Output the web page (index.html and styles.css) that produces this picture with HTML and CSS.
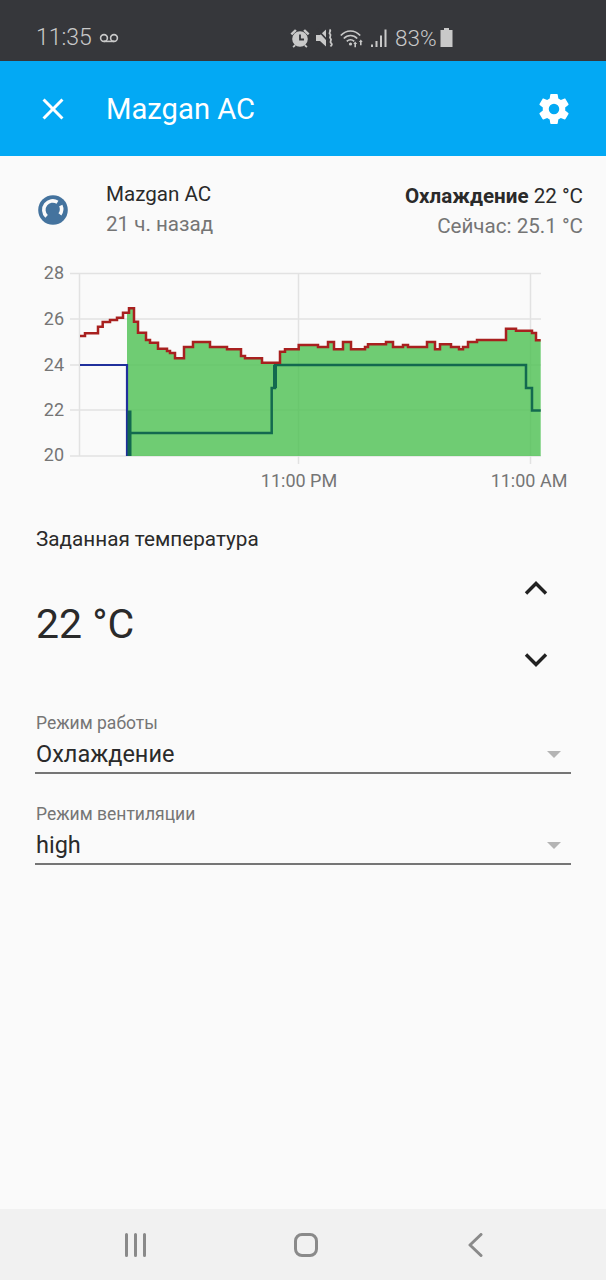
FILE: index.html
```html
<!DOCTYPE html>
<html lang="ru">
<head>
  <meta charset="UTF-8">
  <title>Mazgan AC</title>
  <link rel="stylesheet" href="styles.css">
</head>
<body>

  <!-- Status bar -->
  <div class="statusbar">
    <div class="status-left">
      <span class="clock">11:35</span>
      <svg class="voicemail" width="20" height="10" viewBox="0 0 20 10"><circle cx="5" cy="5" r="3.4"/><circle cx="15" cy="5" r="3.4"/><path d="M5 8.4h10"/></svg>
    </div>
    <div class="status-mid">
      <svg width="20" height="20" viewBox="0 0 20 20"><path class="solid" d="M10 3.200a7.800 7.800 0 1 0 0 15.600 7.800 7.800 0 0 0 0-15.600z"/><path class="cut" d="M10 6.500v5h4"/><path class="solid" d="M.5 5.500L5 1.200l1.800 1.600L2.200 7.200zM19.500 5.500L15 1.200l-1.800 1.600 4.600 4.400zM4.500 16.500l-2 2 1.200 1.200 2.200-2zM15.500 16.500l2 2-1.200 1.200-2.200-2z"/></svg>
      <svg width="18" height="20" viewBox="0 0 18 20"><path class="solid" d="M0 7h4l6-5.500v17L4 13H0z"/><path class="cut" d="M1 1l11 12"/><path class="wave" d="M13.500 1.500c2.500 1.500-1.500 3 .5 4.500s-1.500 3 .5 4.500-1.500 3 .5 4.500 0 2.500-.5 3.500"/></svg>
      <svg width="24" height="20" viewBox="0 0 24 20"><path class="line" d="M.8 7.500c5.500-6 13.900-6 19.400 0M3.800 10.500c3.800-4 9.600-4 13.400 0M6.800 13.400c2.100-2.200 5.300-2.200 7.400 0"/><circle class="solid" cx="10.500" cy="16" r="1.600"/><path class="solid" d="M15.200 13.500l1.900 2.500H16v3.200h-1.600V16h-1.100zM20.800 11.500l1.900 2.500h-1.100v3.200H20V14h-1.100z"/></svg>
      <svg width="18" height="20" viewBox="0 0 18 20"><path class="bars" d="M2 19v-2.500M6.500 19v-6M11 19V7.500M15.500 19V1.500"/></svg>
    </div>
    <span class="battery-text">83%</span>
    <svg class="battery" width="13" height="19" viewBox="0 0 13 19"><path class="solid" d="M4 0h5v2h3.500v17H.5V2H4z"/></svg>
  </div>

  <!-- App header -->
  <header class="toolbar">
    <svg class="toolbar-icon close-icon" width="24" height="24" viewBox="0 0 24 24"><path d="M19 6.410L17.590 5 12 10.590 6.410 5 5 6.410 10.590 12 5 17.590 6.410 19 12 13.410 17.590 19 19 17.590 13.410 12z"/></svg>
    <h1 class="toolbar-title">Mazgan AC</h1>
    <svg class="toolbar-icon gear-icon" width="36" height="36" viewBox="0 0 24 24"><path d="M12 15.500A3.500 3.500 0 0 1 8.500 12 3.500 3.500 0 0 1 12 8.500a3.500 3.500 0 0 1 3.500 3.500 3.500 3.500 0 0 1-3.500 3.500m7.430-2.530c.04-.32.07-.64.07-.97s-.03-.66-.07-1l2.110-1.630c.19-.15.24-.42.12-.64l-2-3.460c-.12-.22-.39-.31-.61-.22l-2.490 1c-.52-.39-1.060-.73-1.690-.98l-.37-2.650A.506.506 0 0 0 14 2h-4c-.25 0-.46.18-.5.420l-.37 2.650c-.63.25-1.170.59-1.690.98l-2.490-1c-.22-.09-.49 0-.61.22l-2 3.460c-.13.22-.07.49.12.64L4.570 11c-.04.34-.07.67-.07 1s.03.650.07.970l-2.110 1.660c-.19.150-.25.420-.12.640l2 3.460c.12.220.39.300.61.220l2.490-1.010c.52.400 1.060.740 1.690.990l.37 2.650c.04.240.25.420.5.420h4c.25 0 .46-.18.5-.42l.37-2.650c.63-.26 1.170-.59 1.690-.99l2.490 1.010c.22.08.49 0 .61-.22l2-3.460c.12-.22.07-.49-.12-.64z"/></svg>
  </header>

  <main class="content">

    <!-- Entity summary -->
    <div class="entity">
      <div class="badge">
        <svg width="30" height="30" viewBox="0 0 30 30"><circle cx="15" cy="15" r="14.800" fill="#44739e"/><path class="badge-arc" d="M8.600 21.400A9 9 0 0 1 19.500 7.200M22.800 10.500A9 9 0 0 1 21.900 19.400"/></svg>
      </div>
      <div class="entity-name">
        <div class="name">Mazgan AC</div>
        <div class="secondary">21 ч. назад</div>
      </div>
      <div class="entity-state">
        <div class="state"><b>Охлаждение</b> 22 °C</div>
        <div class="secondary">Сейчас: 25.1 °C</div>
      </div>
    </div>

    <!-- History chart -->
    <svg class="chart" width="606" height="240" viewBox="0 0 606 240">
      <g class="grid">
        <path d="M70 22.500H541M70 68H541M70 114H541M70 159H541M70 205H541"/>
        <path d="M79.500 22.500V205M298.500 22.500V213M530.500 22.500V213"/>
      </g>
      <path class="area" d="M127 205V61.700H129V57.300H134V70.700H138V81.700H146V89H150V91.700H158V97.700H167V100H170V102H175V107.300H184V96H193V91H210V96H227V98.300H241V105H245V107.300H262V111.700H280V100.700H285V98.300H298.700V94H318V96H328V91H334V98.300H343V91H351V98.300H365V96H368V93.300H386V91H393V96H403V94H408V96H427V91H435V98.300H440V93.300H451V96H459V98.300H463V96H468V91H477V89H506V77.700H516V79.700H532V82H536V89.300H540.700V205z"/>
      <path class="blue-line" d="M80 114H127V205"/>
      <path class="green-line" d="M129.500 159.500V205"/>
      <path class="green-line thin" d="M130 182H271.700V137H275V114H526V137H532V159.500H540.700"/>
      <path class="green-line" d="M275 137V114"/>
      <path class="red-line" d="M80 85H85V82.300H98V75.700H102.700V71H110V69H117V66.700H123V61.700H129V57.300H134V70.700H138V81.700H146V89H150V91.700H158V97.700H167V100H170V102H175V107.300H184V96H193V91H210V96H227V98.300H241V105H245V107.300H262V111.700H280V100.700H285V98.300H298.700V94H318V96H328V91H334V98.300H343V91H351V98.300H365V96H368V93.300H386V91H393V96H403V94H408V96H427V91H435V98.300H440V93.300H451V96H459V98.300H463V96H468V91H477V89H506V77.700H516V79.700H532V82H536V89.300H540.700"/>
      <g class="axis-y">
        <text x="64" y="28">28</text>
        <text x="64" y="74">26</text>
        <text x="64" y="120">24</text>
        <text x="64" y="165">22</text>
        <text x="64" y="210">20</text>
      </g>
      <g class="axis-x">
        <text x="299" y="236">11:00 PM</text>
        <text x="529" y="236">11:00 AM</text>
      </g>
    </svg>

    <!-- Target temperature -->
    <div class="target">
      <div class="target-label">Заданная температура</div>
      <div class="target-row">
        <div class="target-value">22 °C</div>
        <div class="steppers">
          <svg width="36" height="36" viewBox="0 0 36 36"><path d="M8 22.500L18 12.500l10 10"/></svg>
          <svg width="36" height="36" viewBox="0 0 36 36"><path d="M8 13.500l10 10 10-10"/></svg>
        </div>
      </div>
    </div>

    <!-- Dropdowns -->
    <div class="field field-mode">
      <label class="field-label">Режим работы</label>
      <div class="field-value">Охлаждение<span class="arrow"></span></div>
    </div>
    <div class="field field-fan">
      <label class="field-label">Режим вентиляции</label>
      <div class="field-value">high<span class="arrow"></span></div>
    </div>

  </main>

  <!-- Android navigation -->
  <nav class="navbar">
    <svg width="24" height="24" viewBox="0 0 24 24"><path d="M2.500 1.500v21M11.500 1.500v21M20.500 1.500v21"/></svg>
    <svg width="24" height="24" viewBox="0 0 24 24"><rect x="1.500" y="1.500" width="21" height="21" rx="6.500"/></svg>
    <svg width="24" height="24" viewBox="0 0 24 24"><path d="M18 1.500L7 12l11 10.500"/></svg>
  </nav>

</body>
</html>
```
FILE: styles.css
```css
* {
  box-sizing: border-box;
}

html, body {
  height: 100%;
}

body {
  margin: 0;
  display: flex;
  flex-direction: column;
  height: 1280px;
  overflow: hidden;
  background-color: #fafafa;
  font-family: 'Roboto', sans-serif;
  color: #2a2a2a;
}

/* Status bar */
.statusbar {
  height: 61px;
  flex: none;
  display: flex;
  align-items: center;
  padding: 14px 0 0 36px;
  background-color: #36373b;
  color: #c9c9c9;
}

.status-left {
  display: flex;
  align-items: center;
  gap: 7px;
  width: 254px;
}

.clock {
  font-size: 23px;
  font-weight: 300;
}

.voicemail {
  fill: none;
  stroke: #c9c9c9;
  stroke-width: 1.6;
}

.status-mid {
  display: flex;
  align-items: center;
  gap: 6px;
}

.statusbar .solid {
  fill: #c9c9c9;
}

.statusbar .cut {
  fill: none;
  stroke: #36373b;
  stroke-width: 1.8;
}

.statusbar .line {
  fill: none;
  stroke: #c9c9c9;
  stroke-width: 1.7;
}

.statusbar .wave {
  fill: none;
  stroke: #c9c9c9;
  stroke-width: 1.8;
}

.statusbar .bars {
  fill: none;
  stroke: #c9c9c9;
  stroke-width: 2;
}

.battery-text {
  margin-left: 7px;
  font-size: 22.500px;
  font-weight: 300;
}

.battery {
  margin-left: 3px;
}

/* Header */
.toolbar {
  height: 95px;
  flex: none;
  display: flex;
  align-items: center;
  padding: 0 34px 0 35px;
  background-color: #03a9f4;
  color: #fff;
}

.toolbar-icon {
  fill: #fff;
  flex: none;
}

.close-icon {
  width: 36px;
  height: 36px;
}

.toolbar-title {
  flex: 1;
  margin: 0 0 0 35px;
  font-size: 29.200px;
  font-weight: 400;
}

/* Main */
.content {
  flex: 1;
  padding-top: 25px;
}

.entity {
  display: flex;
  height: 70px;
  padding: 0 23px 0 36px;
  font-size: 20.600px;
}

.badge {
  flex: none;
  width: 33px;
  margin-left: 2px;
  padding-top: 14px;
}

.badge svg {
  display: block;
}

.badge-arc {
  fill: none;
  stroke: #fafafa;
  stroke-width: 3.600;
}

.entity-name {
  flex: 1;
  margin-top: -1px;
  margin-left: 35px;
  line-height: 29.500px;
}

.entity-state {
  text-align: right;
  line-height: 30px;
}

.secondary {
  color: #757575;
}

/* Chart */
.chart {
  display: block;
  height: 240px;
  flex: none;
}

.grid path {
  fill: none;
  stroke: #e2e2e2;
  stroke-width: 1.500;
}

.area {
  fill: #4cc051;
  fill-opacity: 0.8;
}

.blue-line {
  fill: none;
  stroke: #20309c;
  stroke-width: 2.200;
}

.green-line {
  fill: none;
  stroke: #13694f;
  stroke-width: 4;
}

.green-line.thin {
  stroke-width: 2.500;
}

.red-line {
  fill: none;
  stroke: #a8201f;
  stroke-width: 2.500;
}

.axis-y text {
  font-size: 18px;
  fill: #757575;
  text-anchor: end;
}

.axis-x text {
  font-size: 18px;
  fill: #757575;
  text-anchor: middle;
}

/* Target temperature */
.target {
  margin-top: 35px;
  padding: 0 52px 0 36px;
}

.target-label {
  font-size: 20.700px;
  line-height: 26px;
}

.target-row {
  display: flex;
  justify-content: space-between;
  align-items: center;
  margin-top: 19px;
}

.target-value {
  font-size: 41px;
  font-weight: 400;
}

.steppers {
  display: flex;
  flex-direction: column;
  gap: 34px;
}

.steppers svg {
  display: block;
  fill: none;
  stroke: #212121;
  stroke-width: 3.400;
}

/* Select fields */
.field {
  margin: 0 35px;
  border-bottom: 2px solid #757575;
  height: 61px;
}

.field-mode {
  margin-top: 36px;
}

.field-fan {
  margin-top: 30px;
}

.field-label {
  display: block;
  padding-left: 1px;
  font-size: 17.500px;
  line-height: 20px;
  color: #757575;
}

.field-value {
  display: flex;
  justify-content: space-between;
  align-items: center;
  padding: 3px 10px 0 1px;
  font-size: 23.500px;
  line-height: 36px;
}

.arrow {
  width: 0;
  height: 0;
  border-left: 7.500px solid transparent;
  border-right: 7.500px solid transparent;
  border-top: 7.500px solid #b4b4b4;
}

/* Navigation bar */
.navbar {
  height: 71px;
  flex: none;
  display: flex;
  align-items: center;
  justify-content: space-between;
  padding: 1px 119px 0 124px;
  background-color: #f1f1f1;
}

.navbar svg {
  fill: none;
  stroke: #8a8a8a;
  stroke-width: 3;
  stroke-linecap: round;
  stroke-linejoin: round;
}
```
